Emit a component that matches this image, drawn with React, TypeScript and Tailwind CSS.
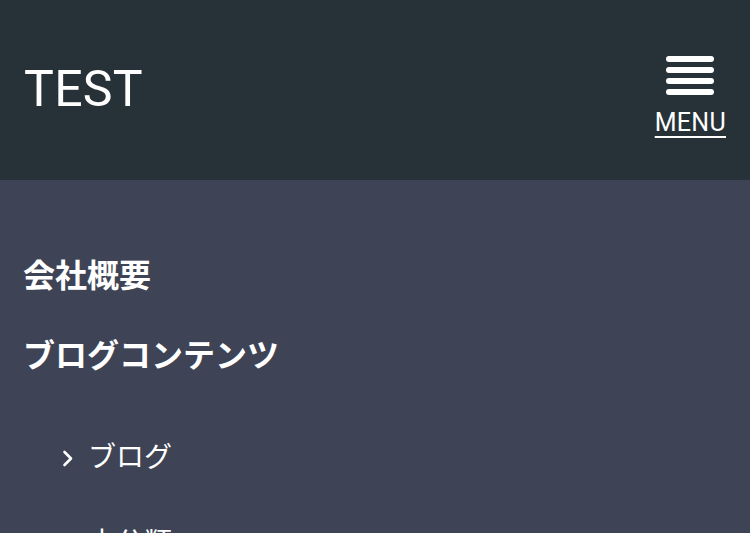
const jp = "font-['Roboto','Noto_Sans_CJK_JP',sans-serif]";

function Chevron() {
  return (
    <svg width="12" height="17" viewBox="0 0 12 17" fill="none" className="shrink-0">
      <polyline points="2.5,2 9,8.5 2.5,15" stroke="white" strokeWidth="2.6" strokeLinecap="round" strokeLinejoin="round" />
    </svg>
  );
}

export default function App() {
  const subItems = ['ブログ', '未分類'];

  return (
    <div className={`min-h-screen bg-[#3e4456] text-white ${jp}`}>
      <header className="h-[180px] bg-[#263238] flex items-center justify-between pl-[24px] pr-[24px]">
        <h1 className="text-[50px] leading-none font-normal tracking-[0.3px] mt-[-2px]">TEST</h1>
        <button className="flex flex-col items-center mt-[10px]">
          <span className="flex flex-col gap-[5px] w-[48px]">
            <span className="h-[6px] rounded-[3px] bg-white" />
            <span className="h-[6px] rounded-[3px] bg-white" />
            <span className="h-[6px] rounded-[3px] bg-white" />
            <span className="h-[6px] rounded-[3px] bg-white" />
          </span>
          <span className="text-[25px] leading-none tracking-[0.3px] underline underline-offset-[5px] decoration-[2px] mt-[15px]">MENU</span>
        </button>
      </header>

      <nav className="pt-[72px] pl-[23px]">
        <ul className="flex flex-col gap-[32px]">
          <li className="text-[32px] leading-[48px] font-bold">会社概要</li>
          <li className="text-[32px] leading-[48px] font-bold">ブログコンテンツ</li>
        </ul>
        <ul className="flex flex-col gap-[44px] mt-[57px] pl-[39px]">
          {subItems.map((s) => (
            <li key={s} className="flex items-center gap-[14px] text-[28px] leading-[42px]">
              <Chevron />
              <span>{s}</span>
            </li>
          ))}
        </ul>
      </nav>
    </div>
  );
}
